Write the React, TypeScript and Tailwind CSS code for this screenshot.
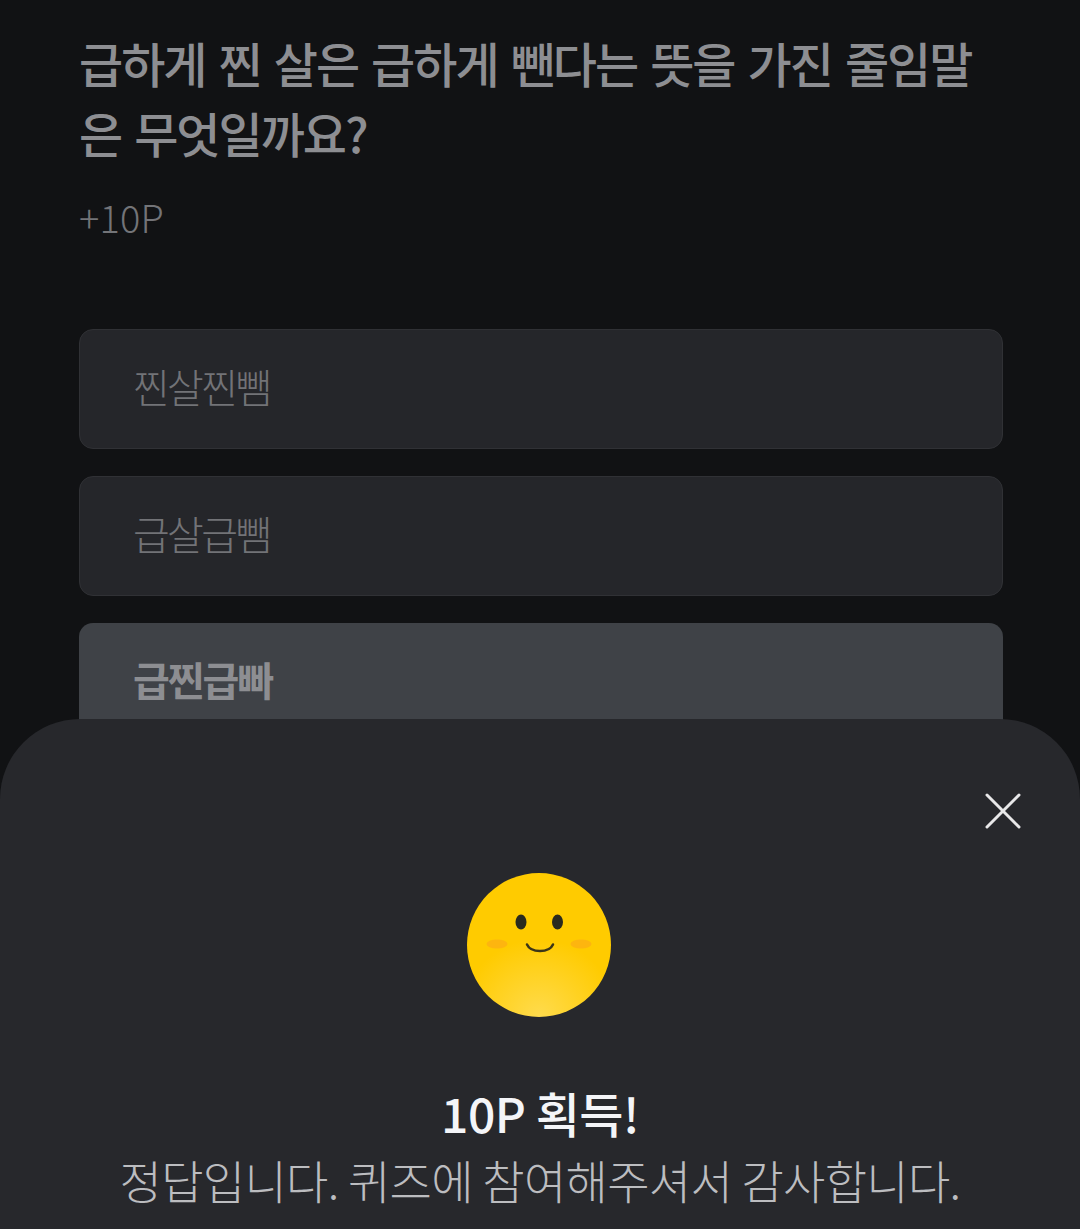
import React from 'react'

const font = { fontFamily: '"Noto Sans CJK KR", "Noto Sans", sans-serif' }

function Option({ label, selected }: { label: string; selected?: boolean }) {
  return (
    <div
      className={
        selected
          ? "h-[120px] shrink-0 rounded-[14px] bg-[#3f4247] pl-[54px] pt-[27px] text-[40px] leading-[58px] tracking-[-2px] font-bold text-[#8d8e92]"
          : "h-[120px] shrink-0 rounded-[14px] border border-[#303135] bg-[#25262a] pl-[53px] pt-[27px] text-[40px] leading-[58px] tracking-[-2.7px] font-light text-[#727377]"
      }
    >
      {label}
    </div>
  )
}

function Smiley() {
  return (
    <svg width="144" height="144" viewBox="0 0 144 144">
      <defs>
        <radialGradient id="face" cx="72" cy="144" r="78" gradientUnits="userSpaceOnUse">
          <stop offset="0" stopColor="#ffdb4d" />
          <stop offset="1" stopColor="#ffcb00" />
        </radialGradient>
      </defs>
      <circle cx="72" cy="72" r="72" fill="url(#face)" />
      <ellipse cx="54" cy="49" rx="5.5" ry="7.5" fill="#2a2a1e" />
      <ellipse cx="90.500" cy="49" rx="5.5" ry="7.5" fill="#2a2a1e" />
      <ellipse cx="30" cy="71" rx="10.5" ry="4.5" fill="#fdb50f" />
      <ellipse cx="114" cy="71" rx="10.5" ry="4.5" fill="#fdb50f" />
      <path d="M60 71.5c2 4.500 7 6.500 13 6.500s11-2 13-6.500" fill="none" stroke="#3b3518" strokeWidth="2.500" strokeLinecap="round" />
    </svg>
  )
}

function App() {
  return (
    <div className="relative h-[1229px] w-[1080px] overflow-hidden bg-[#111214]" style={font}>
      <div className="flex flex-col pl-[79px] pt-[27px] pr-[77px]">
        <h1 className="text-[48px] leading-[70px] font-medium tracking-[-2px] [word-spacing:4.25px] text-[#8d8e92]">
          급하게 찐 살은 급하게 뺀다는 뜻을 가진 줄임말
          <br />
          은 무엇일까요?
        </h1>
        <p className="mt-[23px] text-[38px] leading-[54px] font-light tracking-[0.2px] text-[#737478]">+10P</p>
        <div className="mt-[85px] flex flex-col gap-[27px]">
          <Option label="찐살찐뺌" />
          <Option label="급살급뺌" />
          <Option label="급찐급빠" selected />
        </div>
      </div>

      <div className="absolute inset-x-0 top-[719px] bottom-0 flex flex-col items-center rounded-t-[80px] bg-[#27282c]">
        <svg className="absolute right-[58px] top-[73px]" width="38" height="38" viewBox="0 0 38 38">
          <path d="M3 3l32 32M35 3L3 35" fill="none" stroke="#e8e8e9" strokeWidth="3" strokeLinecap="round" />
        </svg>
        <div className="mt-[154px] mr-[2px] shrink-0">
          <Smiley />
        </div>
        <p className="mt-[62px] text-[48px] leading-[66px] font-medium tracking-[-0.5px] text-[#f4f5f8]">10P 획득!</p>
        <p className="mt-[2px] text-[46px] leading-[64px] font-light tracking-[-0.7px] text-[#bcbdc0]">
          정답입니다. 퀴즈에 참여해주셔서 감사합니다.
        </p>
      </div>
    </div>
  )
}

export default App
